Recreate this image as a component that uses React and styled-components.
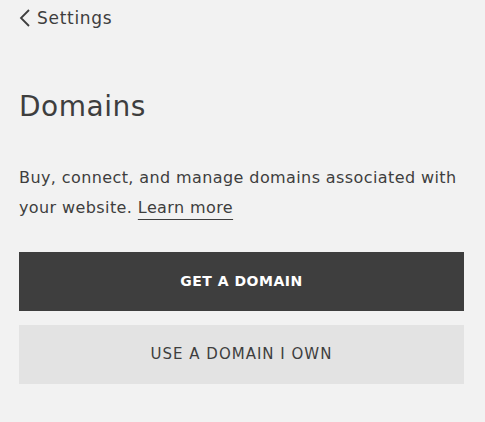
import React from 'react';
import styled, { createGlobalStyle } from 'styled-components';

const GlobalStyle = createGlobalStyle`
  body {
    margin: 0;
    background: #f2f2f2;
    font-family: 'DejaVu Sans', 'Liberation Sans', sans-serif;
    color: #3e3e3e;
  }
`;

const Page = styled.div`
  width: 485px;
  height: 422px;
  padding: 0 21px 0 19px;
  box-sizing: border-box;
`;

const Back = styled.a`
  display: inline-flex;
  align-items: center;
  gap: 6px;
  height: 35px;
  font-size: 17px;
  letter-spacing: 0.7px;
  color: #3e3e3e;
  text-decoration: none;
  cursor: pointer;
`;

const Title = styled.h1`
  margin: 54px 0 0;
  font-size: 28px;
  font-weight: 400;
  letter-spacing: 0.5px;
  line-height: 36px;
`;

const Text = styled.p`
  margin: 38px 0 0;
  font-size: 16px;
  line-height: 30px;
  letter-spacing: 0.4px;
  color: #3e3e3e;
`;

const Link = styled.a`
  color: #3e3e3e;
  text-decoration: underline;
  text-decoration-thickness: 1px;
  text-underline-offset: 6px;
`;

const Buttons = styled.div`
  display: flex;
  flex-direction: column;
  gap: 14px;
  margin-top: 29px;
`;

const Button = styled.button`
  height: 59px;
  width: 100%;
  border: none;
  background: ${p => (p.$primary ? '#3e3e3e' : '#e3e3e3')};
  color: ${p => (p.$primary ? '#fff' : '#3e3e3e')};
  font-family: inherit;
  font-size: ${p => (p.$primary ? '14px' : '15px')};
  font-weight: ${p => (p.$primary ? 700 : 400)};
  letter-spacing: ${p => (p.$primary ? '0.5px' : '1px')};
  padding-bottom: 2px;
  cursor: pointer;
`;

const App = () => (
  <>
    <GlobalStyle />
    <Page>
      <Back>
        <svg width="12" height="20" viewBox="0 0 12 20">
          <path d="M10 2 L2 10 L10 18" fill="none" stroke="#3e3e3e" strokeWidth="1.8" />
        </svg>
        Settings
      </Back>
      <Title>Domains</Title>
      <Text>
        Buy, connect, and manage domains associated with your website.{' '}
        <Link>Learn more</Link>
      </Text>
      <Buttons>
        <Button $primary>GET A DOMAIN</Button>
        <Button>USE A DOMAIN I OWN</Button>
      </Buttons>
    </Page>
  </>
);

export default App;
